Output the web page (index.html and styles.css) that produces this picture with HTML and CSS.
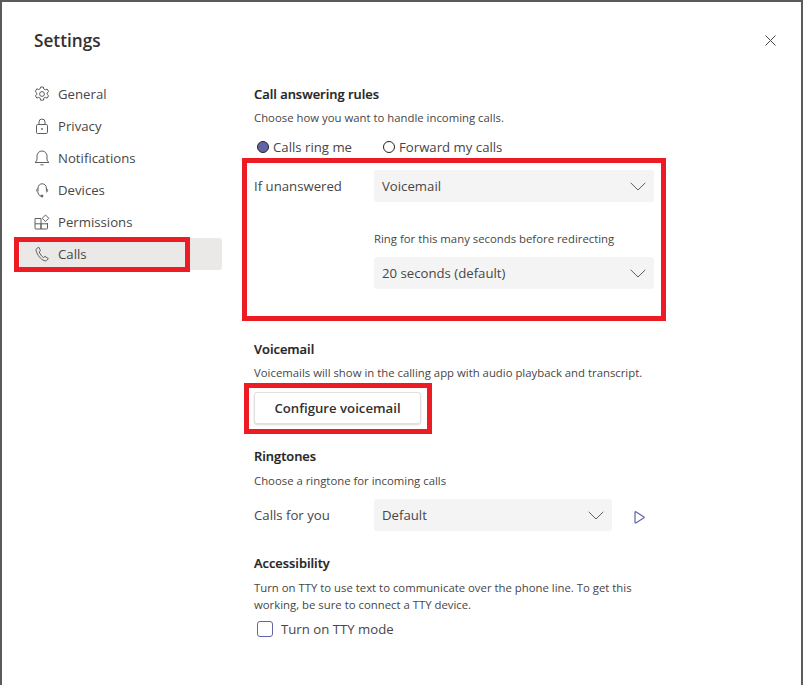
FILE: index.html
```html
<!DOCTYPE html>
<html lang="en">
<head>
<meta charset="utf-8">
<title>Settings</title>
<link rel="stylesheet" href="styles.css">
</head>
<body>
<div class="dialog">
  <aside class="side">
    <h1 class="title">Settings</h1>
    <nav class="nav">
      <a class="nav-item">
        <svg class="nav-icon" viewBox="0 0 16 16" fill="none"><path d="M6.600 0.900h2.800l.4 2 1.500.8 1.900-.7 1.400 2.400-1.500 1.300v1.600l1.500 1.300-1.400 2.400-1.900-.7-1.500.8-.4 2H6.600l-.4-2-1.500-.8-1.900.7-1.400-2.400 1.500-1.300V7.700L1.400 5.100 2.800 2.700l1.900.7 1.500-.8z" transform="translate(0 .1)"/><circle cx="8" cy="8" r="2.400"/></svg>
        <span>General</span>
      </a>
      <a class="nav-item">
        <svg class="nav-icon" viewBox="0 0 16 16" fill="none"><rect x="2.500" y="6.500" width="11" height="9" rx="1.200"/><path d="M5 6.500V4a3 3 0 0 1 6 0v2.500"/><circle cx="8" cy="11" r=".9" fill="currentColor" stroke="none"/></svg>
        <span>Privacy</span>
      </a>
      <a class="nav-item">
        <svg class="nav-icon" viewBox="0 0 16 16" fill="none"><path d="M1 12.500h14c-1.400-1-2-2-2-3.500V6a5 5 0 0 0-10 0v3c0 1.500-.6 2.500-2 3.500z"/><path d="M6.500 14.800h3"/></svg>
        <span>Notifications</span>
      </a>
      <a class="nav-item">
        <svg class="nav-icon" viewBox="0 0 16 16" fill="none"><path d="M4 9.500V6a4.200 4.200 0 0 1 8.400 0v3.500"/><path d="M4 6.500C3 7 2.600 7.600 2.600 8.400S3 9.800 4 10.200c.2 2.200 1.300 3.600 3 3.800"/><path d="M12.400 6.500c1 .5 1.300 1.100 1.300 1.900s-.3 1.400-1.300 1.800"/><circle cx="8" cy="14" r="1" fill="currentColor"/></svg>
        <span>Devices</span>
      </a>
      <a class="nav-item">
        <svg class="nav-icon" viewBox="0 0 16 16" fill="none"><path d="M1 4.500h6v10.500H1.800a.8.800 0 0 1-.8-.8zM1 9.800h12.500M7 9.800V15h5.700a.8.800 0 0 0 .8-.8V9"/><path d="M11.500 1l3.300 3.300-3.300 3.300-3.300-3.300z"/></svg>
        <span>Permissions</span>
      </a>
      <a class="nav-item nav-item-active">
        <svg class="nav-icon" viewBox="0 0 16 16" fill="none"><path d="M4.800 1.200L3 2.300c-.9.600-1.100 1.500-.8 2.700.9 3.800 4.700 8.500 7.900 9.600 1.400.5 2.400.3 3.100-.6l1.100-1.400-3.300-2.200-1.500 1.100C7.800 10.600 6 8 5.200 5.900l1.300-1.200z"/></svg>
        <span>Calls</span>
      </a>
    </nav>
  </aside>

  <main class="content">
    <section class="section section-first">
      <h2 class="heading">Call answering rules</h2>
      <p class="desc">Choose how you want to handle incoming calls.</p>
      <div class="radios">
        <label class="radio"><span class="dot dot-on"></span>Calls ring me</label>
        <label class="radio"><span class="dot"></span>Forward my calls</label>
      </div>
      <div class="form-row row-unanswered">
        <span class="label">If unanswered</span>
        <div class="select select-wide"><span>Voicemail</span>
          <svg class="chev" viewBox="0 0 16 9" fill="none"><path d="M.7.800L8 8l7.300-7.200"/></svg>
        </div>
      </div>
      <div class="form-row row-ring">
        <span class="label"></span>
        <div class="ring-col">
          <p class="ring-text">Ring for this many seconds before redirecting</p>
          <div class="select select-wide"><span>20 seconds (default)</span>
            <svg class="chev" viewBox="0 0 16 9" fill="none"><path d="M.7.800L8 8l7.300-7.200"/></svg>
          </div>
        </div>
      </div>
    </section>

    <section class="section section-voicemail">
      <h2 class="heading">Voicemail</h2>
      <p class="desc">Voicemails will show in the calling app with audio playback and transcript.</p>
      <button class="btn" type="button">Configure voicemail</button>
    </section>

    <section class="section section-ringtones">
      <h2 class="heading">Ringtones</h2>
      <p class="desc desc-low">Choose a ringtone for incoming calls</p>
      <div class="form-row row-tone">
        <span class="label">Calls for you</span>
        <div class="select select-narrow"><span>Default</span>
          <svg class="chev" viewBox="0 0 16 9" fill="none"><path d="M.7.800L8 8l7.300-7.200"/></svg>
        </div>
        <svg class="play" viewBox="0 0 11 13" fill="none"><path d="M1 1.300c0-.5.400-.7.800-.5l8.200 5.100c.3.200.3.700 0 .9l-8.200 5.100c-.4.200-.8 0-.8-.5z"/></svg>
      </div>
    </section>

    <section class="section section-access">
      <h2 class="heading">Accessibility</h2>
      <p class="desc desc-multi desc-low">Turn on TTY to use text to communicate over the phone line. To get this working, be sure to connect a TTY device.</p>
      <label class="check"><span class="box"></span>Turn on TTY mode</label>
    </section>
  </main>

  <svg class="close" viewBox="0 0 11 11" fill="none"><path d="M.5.500l10 10M10.500.500l-10 10"/></svg>

  <div class="mark mark-nav"></div>
  <div class="mark mark-rules"></div>
  <div class="mark mark-btn"></div>
</div>
</body>
</html>
```

FILE: styles.css
```css
* { box-sizing: border-box; }
html, body { margin: 0; height: 100%; }
body {
  background: #5b5b5b;
  padding: 2px 2px 0;
  overflow: hidden;
  font-family: "Open Sans", "Noto Sans", sans-serif;
  color: #252423;
}
.dialog {
  position: relative;
  display: flex;
  height: 683px;
  background: #fff;
}
.side { width: 220px; padding: 0 0 0 18px; flex: none; }
.title {
  margin: 0;
  padding-top: 25px;
  height: 76px;
  font-size: 17.200px;
  line-height: 27px;
  font-weight: 600;
  padding-left: 14px;
  color: #323130;
}
.nav { display: flex; flex-direction: column; }
.nav-item {
  display: flex;
  align-items: center;
  height: 32px;
  padding-left: 14px;
  gap: 8px;
  font-size: 13.200px;
  color: #484644;
  border-radius: 3px;
}
.nav-item-active { background: #ebe9e7; }
.nav-icon {
  width: 16px;
  height: 16px;
  flex: none;
  stroke: currentColor;
  stroke-width: 1;
  color: #605e5c;
}
.content { flex: 1; padding-left: 32px; font-size: 13.200px; }
.section { width: 400px; }
.section-first { padding-top: 82px; }
.section-voicemail { padding-top: 50px; }
.section-ringtones { padding-top: 22px; }
.section-access { padding-top: 22px; }
.heading {
  margin: 0;
  font-size: 12.900px;
  line-height: 20px;
  font-weight: 600;
  -webkit-text-stroke: .2px #252423;
  color: #252423;
}
.desc {
  margin: 5px 0 0;
  font-size: 11.350px;
  line-height: 17px;
  color: #484644;
  white-space: nowrap;
}
.desc-low { margin-top: 6px; }
.desc-multi { white-space: normal; width: 400px; }
.radios { display: flex; gap: 31px; margin-top: 11px; height: 20px; align-items: center; padding-left: 3px; }
.radio { display: flex; align-items: center; gap: 4px; font-size: 13.200px; color: #484644; }
.dot {
  width: 12px;
  height: 12px;
  border-radius: 50%;
  border: 1px solid #252423;
  background: #fff;
}
.dot-on { background: #6264a7; }
.form-row { display: flex; }
.label {
  width: 120px;
  flex: none;
  font-size: 13.200px;
  line-height: 32px;
  color: #484644;
}
.row-unanswered { margin-top: 13px; }
.row-ring { margin-top: 27px; }
.ring-col { width: 280px; }
.ring-text { margin: 0 0 8px; font-size: 11.350px; line-height: 20px; color: #484644; white-space: nowrap; }
.select {
  display: flex;
  align-items: center;
  justify-content: space-between;
  height: 32px;
  padding: 0 8px 0 8px;
  background: #f4f4f4;
  border-radius: 3px;
  font-size: 13.200px;
  color: #484644;
}
.select-wide { width: 280px; }
.select-narrow { width: 238px; }
.chev { width: 16px; height: 9px; stroke: #605e5c; stroke-width: 1; }
.btn {
  display: block;
  margin-top: 11px;
  width: 167px;
  height: 32px;
  padding: 0;
  background: #fff;
  border: 1px solid #e1dfdd;
  border-radius: 3px;
  box-shadow: 0 1px 2px rgba(0, 0, 0, .15);
  font: 600 13.200px "Open Sans", "Noto Sans", sans-serif;
  color: #323130;
}
.row-tone { margin-top: 10px; align-items: flex-start; }
.play {
  width: 11px;
  height: 13px;
  margin: 12px 0 0 22px;
  stroke: #6264a7;
  stroke-width: 1.200;
}
.check {
  display: flex;
  align-items: center;
  gap: 8px;
  margin: 7px 0 0 3px;
  font-size: 13.200px;
  color: #484644;
}
.box {
  width: 16px;
  height: 16px;
  border: 1px solid #6264a7;
  border-radius: 3px;
}
.close {
  position: absolute;
  top: 33px;
  left: 763px;
  width: 11px;
  height: 11px;
  stroke: #484644;
  stroke-width: 1;
}
.mark { position: absolute; border: 5px solid #ed1c24; }
.mark-nav { left: 12px; top: 235px; width: 176px; height: 35px; }
.mark-rules { left: 240px; top: 156px; width: 424px; height: 163px; }
.mark-btn { left: 242px; top: 381px; width: 188px; height: 51px; }
```
